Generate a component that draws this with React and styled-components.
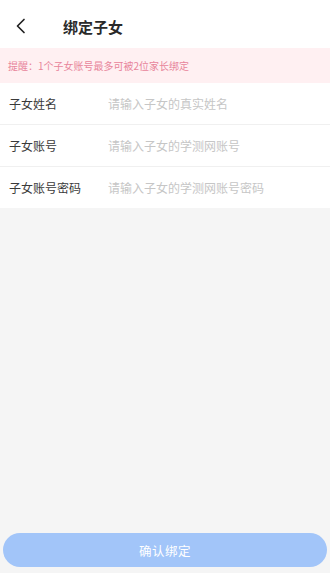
import React from 'react';
import styled, { createGlobalStyle } from 'styled-components';

const GlobalStyle = createGlobalStyle`
  html, body {
    margin: 0;
    padding: 0;
    background: #f5f5f5;
    font-family: "Noto Sans CJK SC", "Noto Sans", sans-serif;
  }
`;

const fields = [
  { label: '子女姓名', placeholder: '请输入子女的真实姓名' },
  { label: '子女账号', placeholder: '请输入子女的学测网账号' },
  { label: '子女账号密码', placeholder: '请输入子女的学测网账号密码', type: 'password' },
];

const App = () => {
  return (
    <Page>
      <GlobalStyle />
      <Header>
        <BackButton aria-label="返回">
          <svg width="12" height="16" viewBox="0 0 12 16" fill="none">
            <path d="M9 1.5 L2.5 8 L9 14.5" stroke="#222" strokeWidth="1.7" strokeLinecap="round" strokeLinejoin="round" />
          </svg>
        </BackButton>
        <Title>绑定子女</Title>
      </Header>
      <Notice>提醒：1个子女账号最多可被2位家长绑定</Notice>
      <Form>
        {fields.map((f) => (
          <Row key={f.label}>
            <Label>{f.label}</Label>
            <Input placeholder={f.placeholder} type={f.type || 'text'} />
          </Row>
        ))}
      </Form>
      <Spacer />
      <Footer>
        <SubmitButton disabled>确认绑定</SubmitButton>
      </Footer>
    </Page>
  );
};

const Page = styled.div`
  display: flex;
  flex-direction: column;
  min-height: 573px;
  background: #f5f5f5;
`;

const Header = styled.div`
  height: 48px;
  box-sizing: border-box;
  padding: 4px 0 0 15px;
  background: #fff;
  display: flex;
  align-items: center;
`;

const BackButton = styled.button`
  border: none;
  background: none;
  padding: 0;
  width: 16px;
  height: 24px;
  display: flex;
  align-items: center;
`;

const Title = styled.h1`
  margin: 0 0 0 32px;
  font-size: 15px;
  font-weight: 700;
  color: #2a2a2a;
`;

const Notice = styled.div`
  height: 35px;
  background: #fff0f2;
  color: #e8859b;
  font-size: 10px;
  display: flex;
  align-items: center;
  padding-left: 8px;
`;

const Form = styled.div`
  background: #fff;
  display: flex;
  flex-direction: column;
`;

const Row = styled.div`
  height: 41px;
  display: flex;
  align-items: center;
  padding-left: 9px;
  border-bottom: 1px solid #f0f0f0;

  &:last-child {
    border-bottom: none;
  }
`;

const Label = styled.span`
  width: 99px;
  font-size: 12px;
  color: #3a3a3a;
  flex-shrink: 0;
`;

const Input = styled.input`
  flex: 1;
  border: none;
  outline: none;
  background: transparent;
  font-size: 12px;
  font-family: inherit;
  color: #333;
  padding: 0;

  &::placeholder {
    color: #c6c6c6;
  }
`;

const Spacer = styled.div`
  flex: 1;
`;

const Footer = styled.div`
  padding: 0 3px 6px;
`;

const SubmitButton = styled.button`
  width: 100%;
  height: 34px;
  border: none;
  border-radius: 17px;
  background: #a2c5f9;
  color: #fff;
  font-size: 12.5px;
  font-family: inherit;
  letter-spacing: 0.5px;
`;

export default App;
